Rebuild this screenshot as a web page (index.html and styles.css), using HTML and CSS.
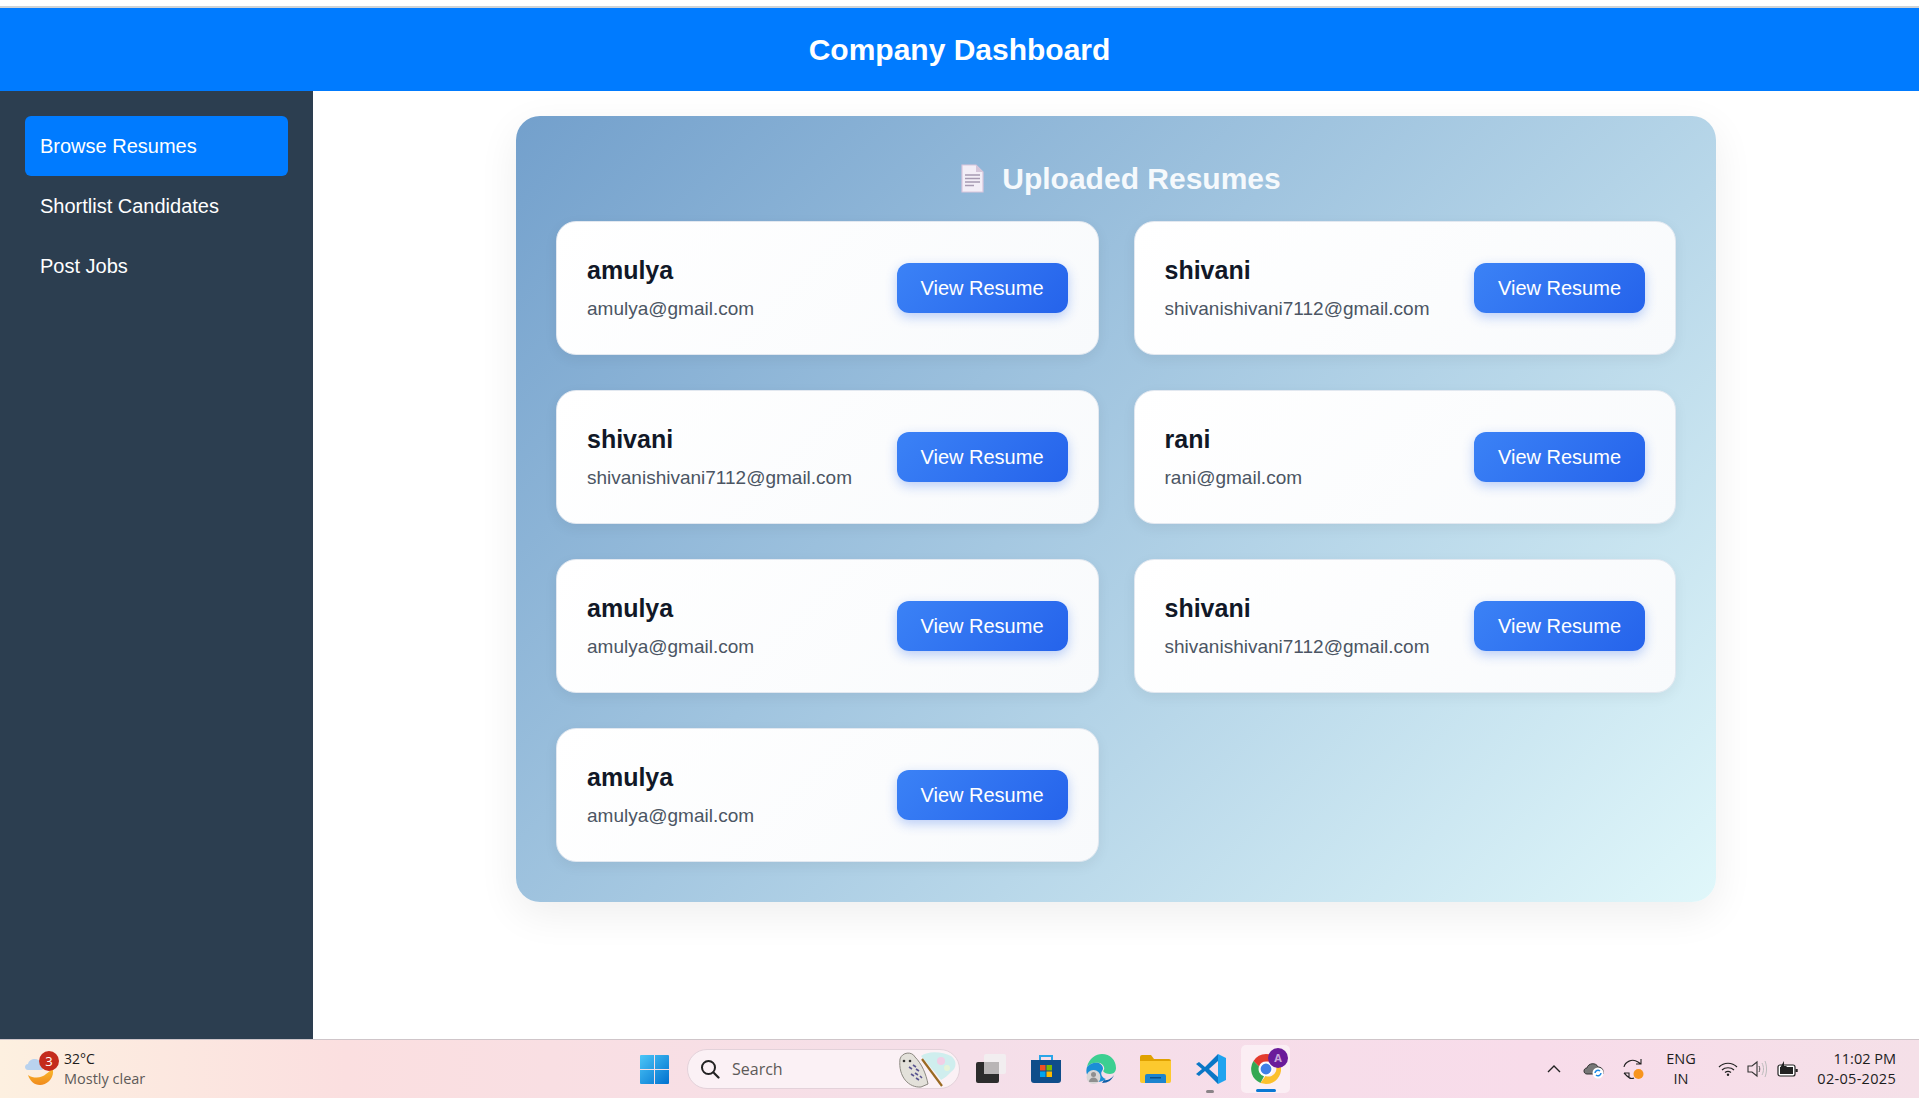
FILE: index.html
```html
<!DOCTYPE html>
<html lang="en">
<head>
    <meta charset="UTF-8">
    <meta name="viewport" content="width=device-width, initial-scale=1.0">
    <title>Company Dashboard</title>
    <link rel="stylesheet" href="styles.css">
</head>
<body>
    <div class="top-strip"></div>
    <header class="page-header"><h1>Company Dashboard</h1></header>

    <div class="layout">
        <nav class="sidebar">
            <a href="#" class="nav-item active">Browse Resumes</a>
            <a href="#" class="nav-item">Shortlist Candidates</a>
            <a href="#" class="nav-item">Post Jobs</a>
        </nav>

        <main class="content">
            <section class="panel">
                <h2 class="panel-title">
                    <svg class="doc-icon" viewBox="0 0 23 29">
                        <path d="M1 1h14l7 7v20H1z" fill="#f3eef7" stroke="#d9c6dc" stroke-width="1.2"/>
                        <path d="M15 1v7h7z" fill="#d5c6da"/>
                        <path d="M4 11h15M4 14.500h15M4 18h15M4 21.500h9" stroke="#a79bb2" stroke-width="1.300"/>
                    </svg>
                    Uploaded Resumes
                </h2>
                <div class="card-grid">
                    <div class="card">
                        <div class="card-info"><h3>amulya</h3><p>amulya@gmail.com</p></div>
                        <button class="view-btn">View Resume</button>
                    </div>
                    <div class="card">
                        <div class="card-info"><h3>shivani</h3><p>shivanishivani7112@gmail.com</p></div>
                        <button class="view-btn">View Resume</button>
                    </div>
                    <div class="card">
                        <div class="card-info"><h3>shivani</h3><p>shivanishivani7112@gmail.com</p></div>
                        <button class="view-btn">View Resume</button>
                    </div>
                    <div class="card">
                        <div class="card-info"><h3>rani</h3><p>rani@gmail.com</p></div>
                        <button class="view-btn">View Resume</button>
                    </div>
                    <div class="card">
                        <div class="card-info"><h3>amulya</h3><p>amulya@gmail.com</p></div>
                        <button class="view-btn">View Resume</button>
                    </div>
                    <div class="card">
                        <div class="card-info"><h3>shivani</h3><p>shivanishivani7112@gmail.com</p></div>
                        <button class="view-btn">View Resume</button>
                    </div>
                    <div class="card">
                        <div class="card-info"><h3>amulya</h3><p>amulya@gmail.com</p></div>
                        <button class="view-btn">View Resume</button>
                    </div>
                </div>
            </section>
        </main>
    </div>

    <footer class="taskbar">
        <div class="tb-weather">
            <div class="weather-icon">
                <svg viewBox="0 0 30 34" width="30" height="34">
                    <defs>
                        <linearGradient id="moonGrad" x1="0" y1="0" x2="0" y2="1">
                            <stop offset="0" stop-color="#fbc02d"/>
                            <stop offset="1" stop-color="#f08a1d"/>
                        </linearGradient>
                    </defs>
                    <path d="M27 15c4 9-4 18-12 18-6 0-10-4-12-10 6 4 14 3 18-1 3-2 5-4 6-7z" fill="url(#moonGrad)"/>
                    <path d="M3 18c-4 0-4-6 0-6 1-6 11-7 13-1 4 0 4 7 0 7z" fill="#b9d2ee"/>
                </svg>
                <span class="weather-badge">3</span>
            </div>
            <div class="weather-text">
                <span class="temp">32°C</span>
                <span class="cond">Mostly clear</span>
            </div>
        </div>

        <div class="tb-center">
            <svg class="win-logo" viewBox="0 0 29 29" width="29" height="29">
                <defs>
                    <linearGradient id="winGrad" x1="0" y1="0" x2="1" y2="1">
                        <stop offset="0" stop-color="#4cc6f7"/>
                        <stop offset="1" stop-color="#0071cf"/>
                    </linearGradient>
                </defs>
                <path d="M0 1a1 1 0 0 1 1-1h13v14H0zM15 0h13a1 1 0 0 1 1 1v13H15zM0 15h14v14H1a1 1 0 0 1-1-1zM15 15h14v13a1 1 0 0 1-1 1H15z" fill="url(#winGrad)"/>
            </svg>

            <div class="search-box">
                <svg viewBox="0 0 20 20" width="20" height="20">
                    <circle cx="8.500" cy="8.500" r="6.500" fill="none" stroke="#222" stroke-width="2"/>
                    <path d="M13.500 13.500l5 5" stroke="#222" stroke-width="2.200" stroke-linecap="round"/>
                </svg>
                <span class="search-label">Search</span>
                <svg class="search-art" viewBox="0 0 62 38" width="62" height="38">
                    <path d="M24 6c8-6 22-4 30 0 6 4 6 12 0 16-3 3-6 6-10 8-6-8-14-17-20-24z" fill="#cfeeee"/>
                    <circle cx="44" cy="11" r="4" fill="#f1cfe6"/>
                    <circle cx="50" cy="18" r="3" fill="#e6f4d8"/>
                    <path d="M3 9c2-7 12-8 15-2 7 7 11 17 13 27l-7 3C12 38 1 27 3 9z" fill="#e3e1da" stroke="#8b8880" stroke-width="1"/>
                    <path d="M12 17l3 2m1-4l3 2m0 2l3 2m-8 3l3 2m1-3l3 2m-2 3l3 2m1-4l2 2" stroke="#5a5590" stroke-width="1.600"/>
                    <circle cx="7" cy="11" r="1.300" fill="#333"/>
                    <circle cx="13" cy="11" r="1.300" fill="#333"/>
                    <path d="M25 9l20 27" stroke="#9a6a22" stroke-width="2.200"/>
                </svg>
            </div>

            <div class="tb-slot">
                <svg viewBox="0 0 30 30" width="30" height="30">
                    <rect x="0" y="8" width="23" height="21" rx="2" fill="#2c2c2c"/>
                    <rect x="8" y="0" width="22" height="20" rx="2" fill="#f2eef0"/>
                    <rect x="8" y="8" width="15" height="12" fill="#b9b5b6"/>
                </svg>
            </div>
            <div class="tb-slot">
                <svg viewBox="0 0 30 30" width="30" height="30">
                    <path d="M9 6V2h12v4" fill="none" stroke="#2aa5e8" stroke-width="2"/>
                    <path d="M0 6h30v20a3 3 0 0 1-3 3H3a3 3 0 0 1-3-3z" fill="#0f4d8a"/>
                    <rect x="9" y="11" width="5.500" height="5.500" fill="#f25022"/>
                    <rect x="15.500" y="11" width="5.500" height="5.500" fill="#7fba00"/>
                    <rect x="9" y="17.500" width="5.500" height="5.500" fill="#00a4ef"/>
                    <rect x="15.500" y="17.500" width="5.500" height="5.500" fill="#ffb900"/>
                </svg>
            </div>
            <div class="tb-slot">
                <svg viewBox="0 0 30 30" width="30" height="30">
                    <path d="M1 13C3 4 10 0 16 0c8 0 14 6 14 14 0 3-2 6-6 6-3 0-6-1-7-3 2-1 2-6-3-8-5-1-10 0-13 4z" fill="#3ccf91"/>
                    <path d="M1 13c3-4 8-5 12-4 4 2 5 6 3 8-2 3 0 7 4 8-4 3-9 4-13 2C2 25-1 19 1 13z" fill="#1b8fd6"/>
                    <path d="M18 26c4 1 8-2 10-5-2 5-6 8-12 8z" fill="#0f5ea8"/>
                    <circle cx="7.500" cy="23" r="7" fill="#d8d6d6"/>
                    <circle cx="7.500" cy="20.500" r="2.500" fill="#8f8f8f"/>
                    <path d="M3 28c0-6 9-6 9 0z" fill="#8f8f8f"/>
                </svg>
            </div>
            <div class="tb-slot">
                <svg viewBox="0 0 31 28" width="31" height="28">
                    <path d="M0 2a2 2 0 0 1 2-2h9l3 4h15a2 2 0 0 1 2 2v4H0z" fill="#e0a100"/>
                    <path d="M0 6h31v20a2 2 0 0 1-2 2H2a2 2 0 0 1-2-2z" fill="#fcc92e"/>
                    <path d="M5 21a2 2 0 0 1 2-2h17a2 2 0 0 1 2 2v7H5z" fill="#1c84cf"/>
                    <rect x="10" y="22" width="11" height="1.500" fill="#0d4f87"/>
                </svg>
            </div>
            <div class="tb-slot">
                <svg viewBox="0 0 30 30" width="30" height="30">
                    <path d="M22 0l8 4v22l-8 4z" fill="#1fa3ef"/>
                    <path d="M22 0L9 13 3 8 0 10l6 5-6 5 3 2 6-5 13 13v-7l-9-8 9-8z" fill="#0a77c6"/>
                </svg>
                <span class="running-dot"></span>
            </div>
            <div class="tb-slot tb-active">
                <svg viewBox="0 0 30 30" width="30" height="30">
                    <path d="M15 0a15 15 0 0 1 13 7.500H15a7.500 7.500 0 0 0-7 5L2.500 7A15 15 0 0 1 15 0z" fill="#e33b2e"/>
                    <path d="M2.500 7L8 12.500A7.500 7.500 0 0 0 13 22.300L9.500 29A15 15 0 0 1 2.500 7z" fill="#34a853"/>
                    <path d="M28 7.500A15 15 0 0 1 15 30l-5.500-1 5-7a7.500 7.500 0 0 0 6-14.500z" fill="#fbc02d"/>
                    <circle cx="15" cy="15" r="6.200" fill="#3f7fe8" stroke="#fff" stroke-width="1.600"/>
                </svg>
                <span class="profile-badge">A</span>
                <span class="active-bar"></span>
            </div>
        </div>

        <div class="tb-tray">
            <svg class="tray-chevron" viewBox="0 0 14 8" width="14" height="8">
                <path d="M1 7l6-6 6 6" fill="none" stroke="#222" stroke-width="1.400"/>
            </svg>
            <svg class="tray-cloud" viewBox="0 0 21 20" width="21" height="20">
                <path d="M4 15c-4 0-4-6 0-6 1-5 9-6 11-1 3 0 5 2 5 4v3z" fill="#777" stroke="#333" stroke-width="1"/>
                <circle cx="15" cy="14" r="5.500" fill="#fff"/>
                <path d="M12 14a3 3 0 0 1 5-2m1 2a3 3 0 0 1-5 2" fill="none" stroke="#1e88e5" stroke-width="1.500"/>
            </svg>
            <svg class="tray-sync" viewBox="0 0 21 22" width="21" height="22">
                <path d="M1 9c1-5 8-9 14-5l3 2M18 1v5h-5M1 15h5v4M1 15l3 3c2 2 5 3 7 2" fill="none" stroke="#222" stroke-width="1.100"/>
                <circle cx="15.500" cy="16" r="5" fill="#f7941d"/>
            </svg>
            <div class="tray-lang"><span>ENG</span><span>IN</span></div>
            <svg class="tray-wifi" viewBox="0 0 20 14" width="20" height="14">
                <path d="M1 5c5-5 13-5 18 0M4 8c3-3 9-3 12 0M7 10.500c2-1.500 4-1.500 6 0" fill="none" stroke="#222" stroke-width="1.200"/>
                <circle cx="10" cy="12.800" r="1.200" fill="#222"/>
            </svg>
            <svg class="tray-volume" viewBox="0 0 20 18" width="20" height="18">
                <path d="M1 6h4l5-4v14l-5-4H1z" fill="none" stroke="#333" stroke-width="1.100"/>
                <path d="M12 6c1 2 1 4 0 6" fill="none" stroke="#555" stroke-width="1"/>
                <path d="M15 3c2 4 2 8 0 12M18 1c2 5 2 11 0 16" fill="none" stroke="#bbb" stroke-width="1"/>
            </svg>
            <svg class="tray-battery" viewBox="0 0 21 16" width="21" height="16">
                <rect x="1" y="4" width="17" height="11" rx="2" fill="#fff" stroke="#222" stroke-width="1.200"/>
                <rect x="3" y="6" width="13" height="7" fill="#222"/>
                <rect x="18.500" y="8" width="2.200" height="3" fill="#222"/>
                <path d="M7 0L3 7h3l-1 4 5-6H7z" fill="#222"/>
            </svg>
            <div class="tray-clock"><span>11:02 PM</span><span class="tray-date">02-05-2025</span></div>
        </div>
    </footer>
</body>
</html>
```

FILE: styles.css
```css
* {
    box-sizing: border-box;
}
html, body {
    height: 100%;
}
body {
    margin: 0;
    display: flex;
    flex-direction: column;
    overflow: hidden;
    font-family: "Liberation Sans", Arial, sans-serif;
    background-color: #fff;
}
.top-strip {
    height: 8px;
    flex-shrink: 0;
    border-bottom: 2px solid #cfd3d6;
    background-color: #fff;
}
.page-header {
    height: 83px;
    flex-shrink: 0;
    display: flex;
    align-items: center;
    justify-content: center;
    background-color: #007bff;
    color: white;
}
.page-header h1 {
    margin: 0;
    font-size: 30px;
}
.layout {
    flex: 1;
    display: flex;
    min-height: 0;
}
.sidebar {
    width: 313px;
    flex-shrink: 0;
    padding: 25px;
    background-color: #2c3e50;
}
.nav-item {
    display: flex;
    align-items: center;
    height: 60px;
    padding: 0 15px;
    border-radius: 6px;
    font-size: 20px;
    color: white;
    text-decoration: none;
}
.nav-item.active {
    background-color: #007bff;
}
.content {
    flex: 1;
    padding-top: 25px;
}
.panel {
    width: 1200px;
    margin: 0 auto;
    padding: 40px;
    border-radius: 24px;
    background: linear-gradient(135deg, #73a0cc, #e0f7fa);
    box-shadow: 0 12px 40px rgba(0, 0, 0, 0.07);
}
.panel-title {
    display: flex;
    align-items: center;
    justify-content: center;
    gap: 18px;
    height: 45px;
    margin: 0 0 20px;
    padding-left: 10px;
    font-size: 30px;
    color: #f5f9fc;
}
.doc-icon {
    width: 23px;
    height: 29px;
}
.card-grid {
    display: grid;
    grid-template-columns: 1fr 1fr;
    gap: 35px;
}
.card {
    height: 134px;
    display: flex;
    align-items: center;
    justify-content: space-between;
    padding: 0 30px;
    border: 1px solid #e2e8f0;
    border-radius: 20px;
    background: linear-gradient(135deg, #ffffff, #f8fafc);
    box-shadow: 0 4px 14px rgba(0, 0, 0, 0.06);
}
.card-info h3 {
    margin: 0 0 13px;
    font-size: 25px;
    color: #111827;
}
.card-info p {
    margin: 0;
    font-size: 19px;
    color: #4b5563;
}
.view-btn {
    width: 171px;
    height: 50px;
    border: none;
    border-radius: 12px;
    font-family: inherit;
    font-size: 20px;
    color: white;
    background: linear-gradient(135deg, #3b82f6, #2563eb);
    box-shadow: 0 4px 12px rgba(37, 99, 235, 0.3);
    cursor: pointer;
}
.taskbar {
    height: 59px;
    flex-shrink: 0;
    display: flex;
    align-items: center;
    border-top: 1px solid #cfc5c9;
    background: linear-gradient(90deg, #fdf0e0 0%, #fbdfe0 18%, #f5dfe9 50%, #f8dcea 80%, #f5e0e8 100%);
    font-family: "Open Sans", sans-serif;
    color: #1d1d1d;
}
.tb-weather {
    width: 640px;
    flex-shrink: 0;
    display: flex;
    align-items: center;
    gap: 10px;
    padding-left: 25px;
}
.weather-icon {
    position: relative;
    width: 29px;
    height: 34px;
}
.weather-badge {
    position: absolute;
    top: -1px;
    right: -5px;
    width: 20px;
    height: 20px;
    border-radius: 50%;
    text-align: center;
    font-size: 13px;
    line-height: 20px;
    color: white;
    background-color: #c42b1c;
}
.weather-text {
    display: flex;
    flex-direction: column;
    font-size: 14px;
    line-height: 20px;
}
.cond {
    font-size: 14.500px;
    color: #5d5a58;
}
.tb-center {
    display: flex;
    align-items: center;
}
.search-box {
    width: 273px;
    height: 40px;
    margin: 0 3px 0 18px;
    display: flex;
    align-items: center;
    padding-left: 12px;
    border: 1px solid #e3d2da;
    border-radius: 20px;
    background-color: #fbf1f5;
    overflow: hidden;
}
.search-label {
    margin-left: 12px;
    font-size: 16px;
    color: #5d5a58;
}
.search-art {
    margin-left: auto;
}
.tb-slot {
    position: relative;
    width: 55px;
    height: 48px;
    display: flex;
    align-items: center;
    justify-content: center;
}
.tb-active::before {
    content: "";
    position: absolute;
    left: 3px;
    right: 3px;
    top: 0;
    bottom: 0;
    border-radius: 5px;
    background-color: #fbeef4;
}
.tb-active svg {
    position: relative;
}
.running-dot {
    position: absolute;
    left: 23px;
    bottom: 0;
    width: 8px;
    height: 3px;
    border-radius: 2px;
    background-color: #8a8488;
}
.profile-badge {
    position: absolute;
    top: 3px;
    right: 5px;
    width: 20px;
    height: 20px;
    border-radius: 50%;
    text-align: center;
    font-size: 11px;
    font-weight: 700;
    line-height: 20px;
    color: #c9a6dc;
    background-color: #6a1b9a;
}
.active-bar {
    position: absolute;
    left: 18px;
    bottom: 1px;
    width: 20px;
    height: 3px;
    border-radius: 2px;
    background-color: #0a78d4;
}
.tb-tray {
    margin-left: auto;
    display: flex;
    align-items: center;
    padding-right: 23px;
}
.tray-cloud {
    margin-left: 22px;
}
.tray-sync {
    margin-left: 19px;
}
.tray-lang {
    width: 40px;
    margin: 0 17px 0 17px;
    display: flex;
    flex-direction: column;
    align-items: center;
    font-size: 14.500px;
    line-height: 20px;
}
.tray-volume {
    margin-left: 9px;
}
.tray-battery {
    margin-left: 10px;
}
.tray-clock {
    width: 98px;
    display: flex;
    flex-direction: column;
    align-items: flex-end;
    font-size: 14.500px;
    line-height: 20px;
}
.tray-date {
    letter-spacing: 0.3px;
}
```
